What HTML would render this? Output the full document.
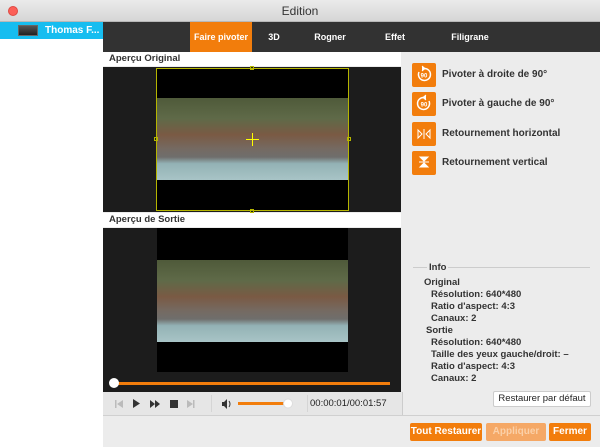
<!DOCTYPE html>
<html><head><meta charset="utf-8"><style>
*{margin:0;padding:0;box-sizing:border-box}
body{width:600px;height:447px;overflow:hidden;font-family:"Liberation Sans",sans-serif;font-size:10px;color:#222;background:#ececec;position:relative}
.a{position:absolute}
.title{left:0;top:0;width:600px;height:22px;background:linear-gradient(#ebebeb,#d6d6d6);border-bottom:1px solid #b8b8b8;text-align:center;line-height:22px;font-size:12px;color:#333}
.dot{left:8px;top:6px;width:10px;height:10px;border-radius:50%;background:#fc5f57;border:1px solid #de4a43}
.side{left:0;top:22px;width:103px;height:425px;background:#fff}
.sel{left:0;top:22px;width:103px;height:17px;background:#16bdf0;color:#fff;font-weight:bold;font-size:10px;line-height:17px;padding-left:45px}
.thumb{left:18px;top:25px;width:20px;height:11px;background:linear-gradient(#555,#222);border:1px solid #666}
.tabs{left:103px;top:22px;width:497px;height:30px;background:#323232}
.tab{top:22px;height:30px;line-height:30px;color:#fff;font-weight:bold;font-size:9px;text-align:center}
.lbl{left:103px;width:298px;height:14px;background:#fff;font-size:9.5px;line-height:14px;padding-left:6px;font-weight:bold;color:#333}
.vid{left:103px;width:298px;background:#1c1c1c}
.img{background:linear-gradient(180deg,#4f5a3a 0%,#5f6a48 25%,#7a5a44 45%,#756a62 62%,#6f6e6c 72%,#93b2b5 80%,#a8c4c6 100%)}
.btn{width:24px;height:24px;background:#f27d0c;border-radius:2px}
.opt{left:442px;font-size:10px;font-weight:bold;color:#333}
.info{font-size:9.5px;color:#333;font-weight:bold}
.ob{height:18px;line-height:18px;background:#f27d0c;color:#fff;font-weight:bold;font-size:10px;text-align:center;border-radius:2px}
</style></head><body>
<div class="a title">Edition</div>
<div class="a dot"></div>
<div class="a side"></div>
<div class="a sel">Thomas F...</div>
<div class="a thumb"></div>
<div class="a tabs"></div>
<div class="a tab" style="left:190px;width:62px;background:#f27d0c">Faire pivoter</div>
<div class="a tab" style="left:264px;width:20px">3D</div>
<div class="a tab" style="left:310px;width:40px">Rogner</div>
<div class="a tab" style="left:382px;width:26px">Effet</div>
<div class="a tab" style="left:450px;width:40px">Filigrane</div>

<div class="a lbl" style="top:52px">Aperçu Original</div>
<div class="a vid" style="top:67px;height:145px"></div>
<div class="a" style="left:156px;top:68px;width:193px;height:143px;background:#000;border:1px solid #b5b500"></div>
<div class="a img" style="left:157px;top:98px;width:191px;height:82px"></div>
<div class="a" style="left:246px;top:139px;width:13px;height:1px;background:#ff0"></div>
<div class="a" style="left:252px;top:133px;width:1px;height:13px;background:#ff0"></div>
<div class="a" style="left:250px;top:66px;width:4px;height:4px;border:1px solid #b5b500"></div>
<div class="a" style="left:250px;top:209px;width:4px;height:4px;border:1px solid #b5b500"></div>
<div class="a" style="left:154px;top:137px;width:4px;height:4px;border:1px solid #b5b500"></div>
<div class="a" style="left:347px;top:137px;width:4px;height:4px;border:1px solid #b5b500"></div>

<div class="a lbl" style="top:213px">Aperçu de Sortie</div>
<div class="a vid" style="top:228px;height:164px"></div>
<div class="a" style="left:157px;top:228px;width:191px;height:144px;background:#000"></div>
<div class="a img" style="left:157px;top:260px;width:191px;height:82px"></div>
<div class="a" style="left:113px;top:382px;width:277px;height:3px;background:#f27d0c"></div>
<div class="a" style="left:109px;top:378px;width:10px;height:10px;border-radius:50%;background:#fff"></div>

<div class="a" style="left:103px;top:392px;width:300px;height:23px;background:#e6e6e6;border-right:1px solid #ccc"></div>
<svg class="a" style="left:103px;top:392px" width="300" height="23">
<g fill="#bbb"><rect x="12" y="8" width="1.5" height="8"/><path d="M20 8v8l-6-4z"/></g>
<path d="M30 7v9l7-4.5z" fill="#333"/>
<path d="M47 8v8l5-4zM52 8v8l5-4z" fill="#333"/>
<rect x="67" y="8" width="8" height="8" fill="#333"/>
<g fill="#bbb"><path d="M84 8v8l6-4z"/><rect x="90" y="8" width="1.5" height="8"/></g>
<rect x="108" y="3" width="1" height="17" fill="#d5d5d5"/>
<path d="M119 10h2l3-3v10l-3-3h-2z" fill="#333"/><path d="M126 9q2 3 0 6" stroke="#333" fill="none"/>
<rect x="135" y="10" width="48" height="3" fill="#f27d0c"/>
<circle cx="185" cy="11.5" r="4.5" fill="#fff" stroke="#ddd"/>
<rect x="204" y="3" width="1" height="17" fill="#d5d5d5"/>
</svg>
<div class="a" style="left:310px;top:398px;font-size:9.5px">00:00:01/00:01:57</div>

<div class="a" style="left:403px;top:52px;width:197px;height:363px;background:#ececec"></div>
<div class="a btn" style="left:412px;top:63px"></div>
<div class="a btn" style="left:412px;top:92px"></div>
<div class="a btn" style="left:412px;top:122px"></div>
<div class="a btn" style="left:412px;top:151px"></div>
<svg class="a" style="left:412px;top:63px" width="24" height="115" fill="none" stroke="#fff" stroke-width="1.5">
<path d="M7 9a6 6 0 1 0 5-3.5"/><path d="M10 3l3 2.5-3 2.5" fill="#fff" stroke-width="1"/>
<text x="12" y="14.5" fill="#fff" stroke="none" font-size="6" font-weight="bold" text-anchor="middle" font-family="Liberation Sans">90</text>
<path d="M17 38a6 6 0 1 1-5-3.5"/><path d="M14 32l-3 2.5 3 2.5" fill="#fff" stroke-width="1"/>
<text x="12" y="43.5" fill="#fff" stroke="none" font-size="6" font-weight="bold" text-anchor="middle" font-family="Liberation Sans">90</text>
<path d="M6 67v8l4-4zM18 67v8l-4-4z" stroke-width="1"/><path d="M12 66v10" stroke-width="1"/>
<path d="M8 94h8l-4 4zM8 104h8l-4-4z" fill="#fff" stroke-width="1"/><path d="M7 99h10" stroke-width="1"/>
</svg>
<div class="a opt" style="top:69px">Pivoter à droite de 90°</div>
<div class="a opt" style="top:98px">Pivoter à gauche de 90°</div>
<div class="a opt" style="top:128px">Retournement horizontal</div>
<div class="a opt" style="top:157px">Retournement vertical</div>

<div class="a" style="left:413px;top:267px;width:177px;height:1px;background:#ccc"></div>
<div class="a info" style="left:427px;top:262px;background:#ececec;padding:0 2px">Info</div>
<div class="a info" style="left:424px;top:277px;line-height:12px">Original</div>
<div class="a info" style="left:431px;top:289px;line-height:12px">Résolution: 640*480<br>Ratio d'aspect: 4:3<br>Canaux: 2</div>
<div class="a info" style="left:426px;top:325px;line-height:12px">Sortie</div>
<div class="a info" style="left:431px;top:337px;line-height:12px">Résolution: 640*480<br>Taille des yeux gauche/droit: –<br>Ratio d'aspect: 4:3<br>Canaux: 2</div>
<div class="a" style="left:493px;top:391px;width:98px;height:16px;background:#fff;border:1px solid #ccc;border-radius:2px;font-size:9.5px;line-height:14px;text-align:center">Restaurer par défaut</div>

<div class="a" style="left:103px;top:415px;width:497px;height:1px;background:#d0d0d0"></div>
<div class="a ob" style="left:410px;top:423px;width:72px">Tout Restaurer</div>
<div class="a ob" style="left:486px;top:423px;width:60px;background:#f5a866;color:#fbd0a8">Appliquer</div>
<div class="a ob" style="left:549px;top:423px;width:42px">Fermer</div>
</body></html>
